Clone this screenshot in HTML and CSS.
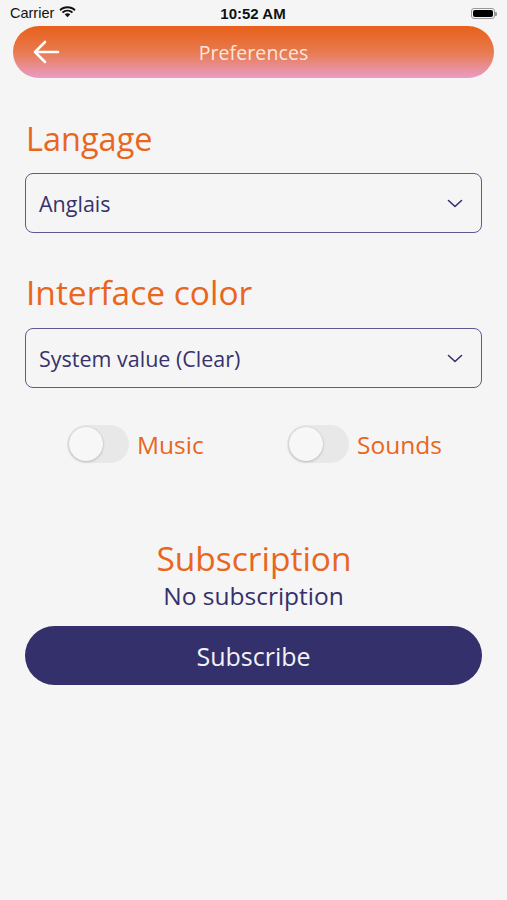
FILE: index.html
```html
<!DOCTYPE html>
<html lang="en">
<head>
<meta charset="utf-8">
<title>Preferences</title>
<link rel="stylesheet" href="styles.css">
</head>
<body>
<div class="screen">
  <div class="status">
    <div class="status-left">
      <span class="carrier">Carrier</span>
      <svg class="wifi" width="17" height="12" viewBox="0 0 17 12">
        <path d="M8.5 2.2c2.6 0 5 1 6.8 2.7l1.3-1.4C14.5 1.5 11.6.3 8.5.3S2.5 1.5.4 3.5l1.3 1.4C3.5 3.2 5.9 2.2 8.5 2.2z" fill="#111"/>
        <path d="M8.5 5.6c1.6 0 3.1.6 4.3 1.7l1.3-1.4C12.6 4.5 10.6 3.7 8.5 3.7S4.4 4.5 2.9 5.9l1.3 1.4c1.2-1.1 2.7-1.7 4.3-1.7z" fill="#111"/>
        <path d="M8.5 7.2c-1.1 0-2 .4-2.8 1.1l2.8 3 2.8-3c-.8-.7-1.7-1.1-2.8-1.1z" fill="#111"/>
      </svg>
    </div>
    <span class="time">10:52 AM</span>
    <div class="battery"><div class="battery-fill"></div></div>
  </div>

  <header class="topbar">
    <svg class="back" width="28" height="24" viewBox="0 0 28 24">
      <path d="M26 12H3M13 2L3 12l10 10" fill="none" stroke="#fff" stroke-width="2.6" stroke-linecap="round" stroke-linejoin="round"/>
    </svg>
    <span class="topbar-title">Preferences</span>
  </header>

  <main class="content">
    <h2 class="section-title first">Langage</h2>
    <div class="select">
      <span>Anglais</span>
      <svg class="chevron" width="16" height="9" viewBox="0 0 16 9"><path d="M1.5 1.5l6.5 6 6.5-6" fill="none" stroke="#34306b" stroke-width="1.6" stroke-linecap="round" stroke-linejoin="round"/></svg>
    </div>

    <h2 class="section-title second">Interface color</h2>
    <div class="select">
      <span>System value (Clear)</span>
      <svg class="chevron" width="16" height="9" viewBox="0 0 16 9"><path d="M1.5 1.5l6.5 6 6.5-6" fill="none" stroke="#34306b" stroke-width="1.6" stroke-linecap="round" stroke-linejoin="round"/></svg>
    </div>

    <div class="toggles">
      <div class="toggle-item">
        <div class="switch"><div class="knob"></div></div>
        <span class="toggle-label">Music</span>
      </div>
      <div class="toggle-item">
        <div class="switch"><div class="knob"></div></div>
        <span class="toggle-label">Sounds</span>
      </div>
    </div>

    <h2 class="section-title centered">Subscription</h2>
    <p class="sub-status">No subscription</p>
    <button class="subscribe">Subscribe</button>
  </main>
</div>
</body>
</html>
```
FILE: styles.css
```css
* { box-sizing: border-box; }
html, body { margin: 0; padding: 0; }
body {
  background: #f5f5f5;
  font-family: "Open Sans", "Noto Sans", sans-serif;
  color: #34306b;
}
.screen { width: 507px; min-height: 900px; }

.status {
  height: 26px;
  display: flex;
  align-items: center;
  justify-content: space-between;
  padding: 0 10px;
  font-family: "Liberation Sans", Arial, sans-serif;
  color: #111;
}
.status-left { display: flex; align-items: center; gap: 5px; width: 120px; }
.carrier { font-size: 14.5px; }
.wifi { margin-top: -2px; }
.time { font-size: 15px; font-weight: bold; }
.status > .battery { margin-left: 95px; }
.battery {
  width: 24px; height: 11px;
  border: 1px solid #999;
  border-radius: 3px;
  padding: 1px;
  position: relative;
  margin-right: 2px;
}
.battery::after {
  content: "";
  position: absolute;
  right: -3px; top: 3px;
  width: 2px; height: 4px;
  background: #999;
  border-radius: 0 1px 1px 0;
}
.battery-fill { width: 100%; height: 100%; background: #000; border-radius: 2px; }

.topbar {
  margin: 0 13px;
  height: 52px;
  border-radius: 26px;
  background: linear-gradient(180deg, #e8601a 0%, #e87a4e 50%, #e89cc6 100%);
  display: flex;
  align-items: center;
  position: relative;
  justify-content: center;
}
.back { position: absolute; left: 19px; top: 14px; }
.topbar-title {
  color: #fbe6dc;
  font-size: 19.5px;
  letter-spacing: 0.1px;
}

.content { padding: 0 25px; display: flex; flex-direction: column; }

.section-title {
  margin: 0;
  font-weight: normal;
  font-size: 32.5px;
  line-height: 38px;
  color: #e8661e;
  padding-left: 1px;
}
.section-title.second { font-size: 33.5px; }
.section-title.first { margin-top: 42px; margin-bottom: 15px; }
.section-title.second { margin-top: 40px; margin-bottom: 17px; }
.section-title.centered { text-align: center; margin-top: 76px; margin-bottom: 4px; font-size: 33.5px; }

.select {
  height: 60px;
  border: 1.3px solid #5e5a8e;
  border-radius: 8px;
  display: flex;
  align-items: center;
  justify-content: space-between;
  padding: 0 18px 0 13px;
  font-size: 21.5px;
  color: #36326c;
}
.chevron { margin-top: 1px; }

.toggles {
  margin-top: 37px;
  height: 38px;
  display: flex;
  padding-left: 42px;
}
.toggle-item { display: flex; align-items: center; gap: 8px; width: 220px; flex-shrink: 0; }
.switch {
  width: 62px; height: 38px;
  border-radius: 19px;
  background: #e8e8e9;
  padding: 2px;
  flex-shrink: 0;
}
.knob {
  width: 34px; height: 34px;
  border-radius: 50%;
  background: #f7f7f7;
  box-shadow: 0 1px 3px rgba(0,0,0,0.18), 0 0 0 0.5px rgba(0,0,0,0.06);
}
.toggle-label { font-size: 24.5px; color: #e8661e; }

.sub-status {
  margin: 0;
  text-align: center;
  font-size: 24.5px;
  line-height: 30px;
  color: #34306b;
}
.subscribe {
  margin-top: 15px;
  height: 59px;
  border: none;
  border-radius: 30px;
  background: #33306b;
  color: #f2f2f7;
  font-family: "Open Sans", "Noto Sans", sans-serif;
  font-size: 25px;
  cursor: pointer;
}
```
